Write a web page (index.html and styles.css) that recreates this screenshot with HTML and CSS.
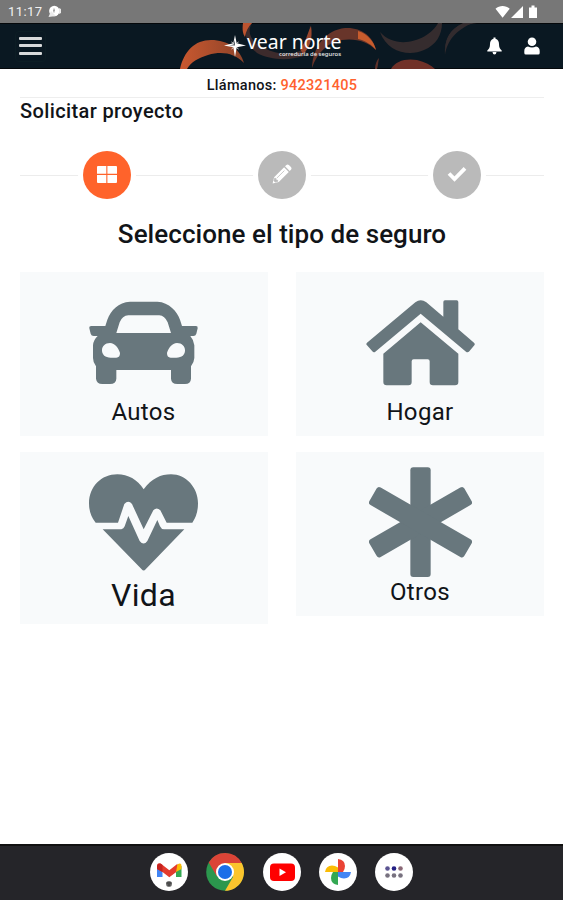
FILE: index.html
```html
<!DOCTYPE html>
<html lang="es">
<head>
<meta charset="utf-8">
<title>Solicitar proyecto</title>
<link rel="stylesheet" href="styles.css">
</head>
<body>
<div class="status">
  <span class="clock">11:17</span>
  <svg class="chat" width="14" height="13" viewBox="0 0 14 13"><circle cx="6.3" cy="6" r="5.2" fill="#fff"/><path d="M0.5 12 3 6l5 5zM11 3l2 1v4l-2 1z" fill="#e9e9e9"/><path d="M6 3.5v4M5 6l2-1" stroke="#999" stroke-width="1"/></svg>
  <svg class="signals" width="44" height="15" viewBox="0 0 44 15" fill="#fff"><path d="M0.500 4.800C4.500 1.100 10.700 1.100 14.700 4.800L7.600 13.700zM28 2v12H16zM34 3.500h2.500V1.500h3v2H42V14h-8z"/></svg>
</div>
<header class="bar">
  <svg class="art" width="563" height="46" viewBox="0 23 563 46">
    <defs><linearGradient id="g" x1="0" x2="1"><stop offset="0" stop-color="#c9582f"/><stop offset="1" stop-color="#8d4329"/></linearGradient></defs>
    <path d="M180 69C184 51 195 40 211 40c17 0 29 9 33 23-10-10-22-12-36-8-10 3-17 7-21 14z" fill="url(#g)"/>
    <path d="M245 23c-1 13 3 23 12 30 13 7 31 8 47 3 4-11 9-21 6-31-1 13-2 20-7 24-9 7-26 6-39-1-12-5-18-15-12-25z" fill="#3d2b2c"/>
    <path d="M243 23c-1 7 0 11 2 14 1-6 3-10 7-14z" fill="#bd5430"/>
    <path d="M300 49c6-7 7-15 11-23 2 12-1 22-8 28z" fill="#99482f"/>
    <path d="M312 68c1-22 14-38 33-40 16-1 28 8 31 22-8-8-20-12-34-10-14 2-25 13-30 28z" fill="#68352a"/>
    <path d="M358 31c10 3 16 11 18 19-4-5-10-9-18-11z" fill="#c75c2d"/>
    <path d="M380 32c7 20 29 25 44 18 12-5 18-15 18-27h-4c-8 16-40 29-58 9z" fill="#352c2e"/>
    <path d="M445 55c0-18 12-30 32-32h-9c-14 2-24 12-23 32z" fill="#322b2e"/>
    <path d="M445 55c2-13 10-25 28-32h-10c-13 6-19 17-18 32z" fill="#322b2e"/>
    <path d="M391 69c4-8 15-11 26-9 8 2 14 5 18 9z" fill="#713128"/>
    <path d="M375 69c0-5 2-9 4-11-1 5-1 8-2 11z" fill="#5f3129"/>
  </svg>
  <div class="menu"><i></i><i></i><i></i></div>
  <svg class="logo" width="126" height="40" viewBox="222 25 126 40" role="img" aria-label="vear norte">
    <path d="M235 35l1.700 8.300L246 45.600l-9.300 1.700L235 57l-1.700-9.700-9.300-1.700 9.300-2.300z" fill="#fff"/><path d="M231.500 42l2.500 2M238.500 42l-2.500 2M231.500 49l2.500-2M238.500 49l-2.500-2" stroke="#ddd"/><path d="M235 40v5.600h-6l4.500-1z" fill="#555e65"/>
    <text class="brand" x="247" y="49" textLength="94.500" lengthAdjust="spacingAndGlyphs">vear norte</text>
    <text class="tagline" x="279" y="56" textLength="62" lengthAdjust="spacingAndGlyphs">correduría de seguros</text>
  </svg>
  <div class="actions">
    <svg width="15" height="18" viewBox="0 0 15 18" fill="#fff"><path d="M6.500.5h2v1.300C11 2.500 12 4.500 12 7c0 3.500 1 5 2.700 6.500V14.500H.3V13.500C2 12 3 10.500 3 7c0-2.500 1-4.500 3.500-5.200zM5.500 15h4q-.3 2.500-2 2.500T5.500 15z"/></svg>
    <svg width="16" height="18" viewBox="0 0 16 18" fill="#fff"><circle cx="8" cy="4.700" r="4.300"/><path d="M4 9.500q4 2.200 8 0 3.700.8 3.700 4.500v2q0 1.500-1.500 1.500H1.800Q.3 17.500.3 16v-2Q.3 10.300 4 9.500z"/></svg>
  </div>
</header>
<main>
  <p class="call">Llámanos: <b>942321405</b></p>
  <h1>Solicitar proyecto</h1>
  <div class="steps">
    <div class="step active"><svg width="20" height="17" viewBox="0 0 20 17" fill="#fff"><path d="M1 0h8.300v7.700H0V1q0-1 1-1zM10.400 0H19q1 0 1 1v6.700h-9.600zM0 8.900h9.300V17H1q-1 0-1-1zM10.400 8.900H20V16q0 1-1 1h-8.600z"/></svg></div>
    <div class="step"><svg width="20" height="20" viewBox="0 0 20 20"><path d="M12.100 3.200 16.800 7.900 6.800 17.900.6 19.400 2.100 13.200zM13 2.300 14.400.9q1.200-1 2.500.2l2 2q1.200 1.300.1 2.600L17.700 7z" fill="#fff"/><path d="M4.700 14.200l7.700-7.600M2.700 14.200l1 .2.300 1.600 1.600.3.200 1-2.500.8-1.300-1.300z" stroke="#bbb" stroke-width=".8" fill="#b9b9b9"/></svg></div>
    <div class="step"><svg width="20" height="16" viewBox="0 0 20 16"><path d="M2 7.500 7.500 13 18 2.300" fill="none" stroke="#fff" stroke-width="3.800"/></svg></div>
  </div>
  <h2>Seleccione el tipo de seguro</h2>
  <div class="grid">
    <div class="card autos">
      <svg width="109" height="84" viewBox="237 107 327 252"><path fill="#68777d" fill-rule="evenodd" d="M360 109H442C478 111 501 138 510 163L516 182H558Q564 182 563 189L559 205Q557 212 550 212H541Q552 225 553 240V278Q552 292 543 303V340Q542 356 525 356H502Q484 356 483 340V314H319V340Q318 356 300 356H277Q260 356 258 340V303Q249 292 249 278V240Q250 224 263 212H251Q244 212 242 205L238 189Q237 182 244 182H286L292 163C303 134 325 111 360 109ZM355 150Q337 151 329 171L319 203H483L473 171Q464 151 448 150ZM300 233C285 233 276 243 276 255C276 269 286 277 302 277H319Q330 277 330 263C326 249 315 234 300 233ZM501 233C486 234 475 249 471 263Q471 277 482 277H499C516 277 525 269 525 255C525 243 516 233 501 233Z"/></svg>
      <span>Autos</span>
    </div>
    <div class="card hogar">
      <svg width="109" height="86" viewBox="243 104 327 258" fill="#68777d"><path d="M391 111Q407 99 424 111L475 154V110Q475 105 480 105H515Q520 105 520 110V192L567 232Q571 236 568 240L553 258Q548 263 543 259L407 145 271 259Q266 263 262 258L246 240Q242 236 246 232Z"/><path d="M407 171 520 265V350Q520 360 510 360H444Q434 360 434 350V288Q434 282 428 282H386Q380 282 380 288V350Q380 360 370 360H305Q295 360 295 350V265Z"/></svg>
      <span>Hogar</span>
    </div>
    <div class="card vida">
      <svg width="109" height="97" viewBox="237 86 327 291"><path fill="#68777d" d="M401 132C425 99 453 87 483 87C528 87 564 127 564 174Q564 208 547 232H470L451 195Q440 184 430 195L401 252 366 176Q355 162 343 176L324 232H257Q237 208 237 174C237 124 274 87 322 87C354 87 382 103 401 132ZM278 252H334Q341 250 344 243L355 212 389 287Q401 302 412 287L442 224 450 243Q454 252 462 252H523L407 372Q401 379 395 372Z"/></svg>
      <span>Vida</span>
    </div>
    <div class="card otros">
      <svg width="103" height="110" viewBox="252 66 309 330"><g fill="#68777d"><rect x="376" y="67" width="61" height="329" rx="9"/><rect x="376" y="67" width="61" height="329" rx="9" transform="rotate(60 406.500 231.500)"/><rect x="376" y="67" width="61" height="329" rx="9" transform="rotate(-60 406.500 231.500)"/></g></svg>
      <span>Otros</span>
    </div>
  </div>
</main>
<footer class="dock">
  <svg width="38" height="38" viewBox="0 0 38 38"><circle cx="19" cy="19" r="19" fill="#fff"/><path d="M7 13v11h5.500V15z" fill="#4285f4"/><path d="M26 15v9h5.500V13z" fill="#34a853"/><path d="M26 13l2-2q3.500-1.500 3.500 2v3L26 19z" fill="#fbbc04"/><path d="M7 13q0-4 4-2.200l8.300 6.400 8.200-6.400-1.500 8.500-6.700 5L12.500 19 7 16z" fill="#e33b2e"/><path d="M7 13v3l5.500 3v-7l-2-1.500Q7.500 10 7 13z" fill="#c5221f"/><circle cx="19" cy="31" r="3" fill="#777"/><path d="M16.500 30h5M17.500 32h3" stroke="#222"/></svg>
  <svg width="38" height="38" viewBox="0 0 38 38"><circle cx="19" cy="19" r="18.800" fill="#2b974d"/><path d="M19 10h16.700A18.800 18.800 0 0 1 19 37.800L27 24z" fill="#fbc52d"/><path d="M2.700 9.600A18.800 18.800 0 0 1 35.700 10H19l-8 13.500z" fill="#db4437"/><circle cx="19" cy="19" r="9" fill="#fff"/><circle cx="19" cy="19" r="7" fill="#1a6fe8"/></svg>
  <svg width="38" height="38" viewBox="0 0 38 38"><circle cx="19" cy="19" r="19" fill="#fff"/><rect x="7" y="10.500" width="25" height="17.500" rx="4" fill="#f00"/><path d="M16.500 15.500v7.500l6.500-3.700z" fill="#fff"/></svg>
  <svg width="38" height="38" viewBox="0 0 38 38"><circle cx="19" cy="19" r="19" fill="#fff"/><path d="M19 6q7 1 7 7 0 3-2 6h-5z" fill="#ea4335"/><path d="M6 19q1-6.500 7-6.500 3 0 6 2V19z" fill="#fbbc04"/><path d="M19 19h13q-1 6.500-7 6.500-3 0-6-2z" fill="#4285f4"/><path d="M19 19v13q-7-1-7-7 0-3 2-6z" fill="#34a853"/></svg>
  <svg width="38" height="38" viewBox="0 0 38 38"><circle cx="19" cy="19" r="19" fill="#fff"/><g fill="#77717f"><circle cx="12.500" cy="15.500" r="2.300" fill="#5b5492"/><circle cx="19" cy="15.500" r="2.300" fill="#252184"/><circle cx="25.500" cy="15.500" r="2.300" fill="#8a6876"/><circle cx="12.500" cy="22.500" r="2.300"/><circle cx="19" cy="22.500" r="2.300"/><circle cx="25.500" cy="22.500" r="2.300"/></g></svg>
</footer>
</body>
</html>
```
FILE: styles.css
```css
* { box-sizing: border-box; }
body {
  margin: 0;
  height: 900px;
  display: flex;
  flex-direction: column;
  overflow: hidden;
  background: #fff;
  color: #111418;
  font-family: Roboto, sans-serif;
}
svg { display: block; flex: none; }
.status {
  height: 23px;
  display: flex;
  align-items: center;
  padding: 0 24px 0 8px;
  background: #777;
  color: #f1f1f1;
}
.clock { font-size: 13px; letter-spacing: 0.4px; }
.chat { margin-left: 6px; }
.signals { margin-left: auto; }
.bar {
  position: relative;
  height: 46px;
  display: flex;
  align-items: center;
  justify-content: space-between;
  padding: 0 23px 0 15px;
  background: #0a1822;
  border-top: 1px solid #05080b;
  border-bottom: 1px solid #05080b;
}
.art { position: absolute; left: 0; top: -1px; }
.menu {
  position: relative;
  width: 31px;
  height: 31px;
  padding: 5px 3px 6px;
  display: flex;
  flex-direction: column;
  justify-content: space-between;
  border: 1px solid #0c1d24;
  border-radius: 4px;
}
.menu i { height: 3px; border-radius: 1px; background: #d9dadb; }
.logo { position: absolute; left: 222px; top: 1px; overflow: visible; }
.brand { font: 20px "Noto Sans", sans-serif; fill: #fff; }
.tagline { font: 500 6px "Noto Sans", sans-serif; fill: #eee; }
.actions { position: relative; display: flex; gap: 22px; }
main { flex: 1; padding: 0 19px 0 20px; }
.call {
  margin: 0;
  height: 29px;
  padding-top: 8px;
  border-bottom: 1px solid #eee;
  text-align: center;
  font-size: 14.5px;
  font-weight: 500;
  line-height: 18px;
  letter-spacing: 0.28px;
}
.call b { font-weight: 500; color: #ff622e; }
h1 {
  margin: 0;
  font-size: 20px;
  font-weight: 500;
  line-height: 26px;
  letter-spacing: 0.38px;
}
.steps {
  display: flex;
  justify-content: space-around;
  height: 48px;
  margin-top: 27px;
  background: linear-gradient(#ececec, #ececec) 0 24px / 100% 1px no-repeat;
}
.step {
  width: 48px;
  height: 48px;
  display: flex;
  align-items: center;
  justify-content: center;
  padding-bottom: 2px;
  border-radius: 50%;
  background: #bababa;
  box-shadow: 0 0 0 5px #fff;
}
.active { background: #ff632b; }
h2 {
  margin: 17px 0 0;
  text-align: center;
  font-size: 26px;
  font-weight: 500;
  line-height: 36px;
  letter-spacing: 0.05px;
}
.grid {
  display: grid;
  grid-template-columns: 1fr 1fr;
  gap: 16px 28px;
  align-items: start;
  margin-top: 20px;
}
.card {
  height: 164px;
  display: flex;
  flex-direction: column;
  align-items: center;
  background: #f8fafb;
  font-size: 24px;
  line-height: 28px;
  letter-spacing: 0.35px;
}
.autos, .vida { padding-right: 1px; }
.autos { padding-top: 29px; }
.autos span { margin-top: 13px; }
.hogar { padding-top: 28px; }
.hogar span { margin-top: 12px; }
.vida { height: 172px; padding-top: 22px; font-size: 32px; line-height: 38px; }
.vida span { margin-top: 5px; }
.otros { padding-top: 15px; }
.otros span { margin-top: 1px; }
.dock {
  height: 56px;
  display: flex;
  align-items: center;
  justify-content: center;
  gap: 18.3px;
  padding-bottom: 2px;
  background: #252529;
  border-top: 2px solid #111;
}
```
